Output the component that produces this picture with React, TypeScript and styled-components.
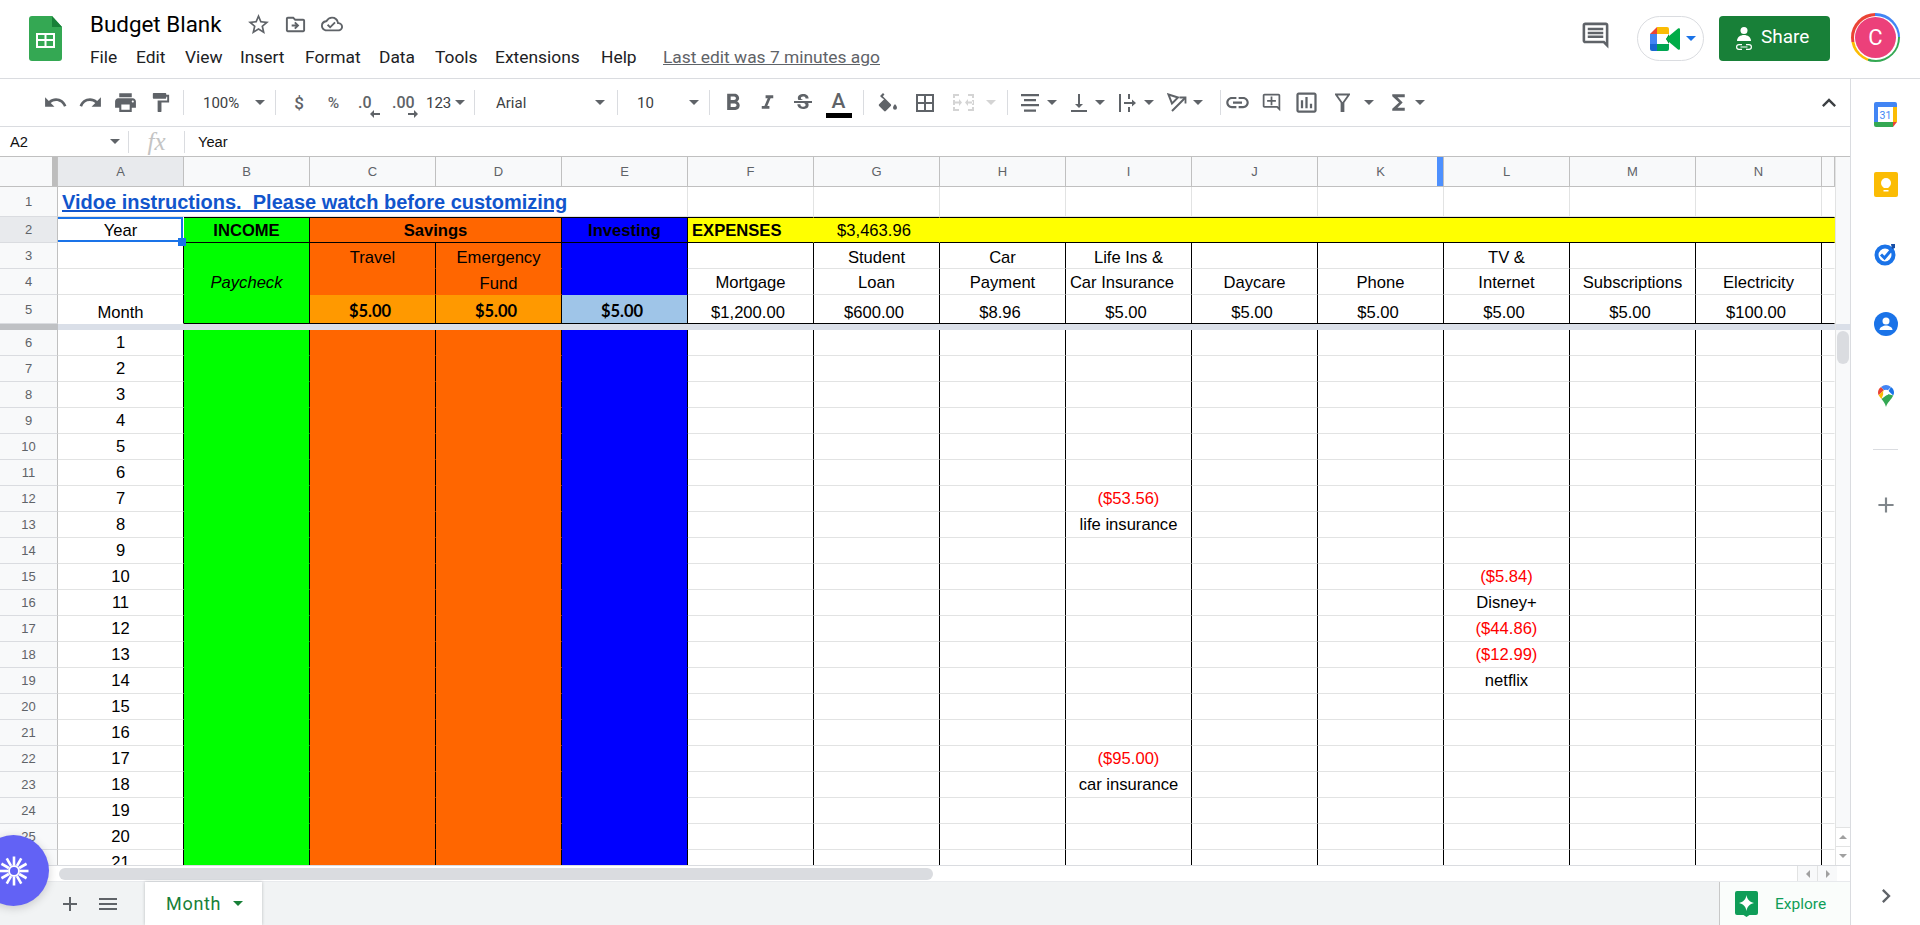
import React from 'react'
import styled, { createGlobalStyle } from 'styled-components'
import {
  MdUndo, MdRedo, MdPrint, MdFormatPaint, MdFormatBold, MdFormatItalic, MdStrikethroughS, MdBorderAll,
  MdVerticalAlignBottom, MdLink, MdOutlineAddComment, MdOutlineInsertChart, MdFunctions, MdExpandLess,
  MdChevronRight, MdAdd, MdMenu, MdStarBorder, MdOutlineDriveFileMove, MdOutlineCloudDone, MdOutlineComment,
} from 'react-icons/md'

const GRID = '#e2e3e3'
const HEAD = '#f8f9fa'
const GREY = '#5f6368'

const Global = createGlobalStyle`
  html, body { margin: 0; padding: 0; background: #fff; }
  * { box-sizing: border-box; }
`

const Page = styled.div`
  width: 1920px;
  height: 925px;
  position: relative;
  overflow: hidden;
  display: flex;
  flex-direction: column;
  font-family: Roboto, "Liberation Sans", sans-serif;
`

/* title bar */
const TitleBar = styled.header`
  height: 79px;
  flex: none;
  display: flex;
  border-bottom: 1px solid #dadce0;
  padding-left: 29px;
`
const Logo = styled.svg`
  margin-top: 16px;
  flex: none;
`
const TitleStack = styled.div`
  margin-left: 28px;
  display: flex;
  flex-direction: column;
`
const TitleRow = styled.div`
  height: 26px;
  margin-top: 11px;
  display: flex;
  align-items: center;
  color: ${GREY};
`
const DocName = styled.div`
  font-size: 22.4px;
  color: #000;
  width: 149.5px;
`
const TitleIcon = styled.span`
  width: 37px;
  flex: none;
  display: flex;
  justify-content: center;
`
const MenuRow = styled.nav`
  margin-top: 7px;
  height: 26px;
  display: flex;
  align-items: center;
  font-size: 17.4px;
  color: #202124;
`
const MenuItem = styled.span<{ $w: number }>`
  width: ${p => p.$w}px;
  flex: none;
`
const LastEdit = styled.span`
  color: #5f6368;
  text-decoration: underline;
  margin-left: 15px;
  font-size: 17.4px;
`
const TitleRight = styled.div`
  margin-left: auto;
  display: flex;
  align-items: flex-start;
  padding-top: 16px;
  padding-right: 20px;
  color: ${GREY};
`
const CommentBtn = styled.span`
  display: flex;
  margin-top: 4px;
  margin-right: 26px;
`
const MeetBtn = styled.div`
  width: 67px;
  height: 45px;
  border: 1px solid #dadce0;
  border-radius: 23px;
  display: flex;
  align-items: center;
  padding-left: 12px;
  gap: 6px;
`
const ShareBtn = styled.div`
  width: 111px;
  height: 45px;
  margin-left: 15px;
  border-radius: 4px;
  background: #188038;
  color: #fff;
  font-size: 19px;
  display: flex;
  align-items: center;
  padding-left: 16px;
  gap: 8px;
`
const ShareLabel = styled.span`
  padding-bottom: 5px;
`
const AvatarRing = styled.div`
  width: 49px;
  height: 49px;
  margin-left: 21px;
  margin-top: -3px;
  border-radius: 50%;
  background: conic-gradient(#4285f4 0 25%, #34a853 25% 55%, #fbbc04 55% 72%, #ea4335 72% 100%);
  display: flex;
  align-items: center;
  justify-content: center;
`
const AvatarInner = styled.div`
  width: 44px;
  height: 44px;
  border-radius: 50%;
  background: #fff;
  display: flex;
  align-items: center;
  justify-content: center;
`
const AvatarFace = styled.div`
  width: 41px;
  height: 41px;
  border-radius: 50%;
  background: #ec407a;
  color: #fff;
  font-size: 22px;
  display: flex;
  align-items: center;
  justify-content: center;
`

/* main area */
const Body = styled.div`
  flex: 1;
  min-height: 0;
  display: flex;
`
const Work = styled.main`
  width: 1851px;
  flex: none;
  display: flex;
  flex-direction: column;
  border-right: 1px solid #dadce0;
`

/* toolbar */
const Toolbar = styled.div`
  height: 48px;
  flex: none;
  display: flex;
  align-items: center;
  padding-left: 38px;
  border-bottom: 1px solid #dadce0;
  color: ${GREY};
  font-size: 15px;
`
const Sep = styled.span<{ $ml?: number }>`
  width: 1px;
  height: 25px;
  background: #dadce0;
  flex: none;
  margin-left: ${p => p.$ml || 0}px;
`
const Tool = styled.span<{ $w: number; $pl?: number; $pr?: number; $between?: boolean; $gap?: number }>`
  width: ${p => p.$w}px;
  flex: none;
  height: 30px;
  display: flex;
  align-items: center;
  justify-content: ${p => (p.$between ? 'space-between' : p.$pl !== undefined ? 'flex-start' : 'center')};
  padding-left: ${p => p.$pl || 0}px;
  padding-right: ${p => p.$pr || 0}px;
  gap: ${p => p.$gap || 0}px;
`
const ToolText = styled.span<{ $dark?: boolean; $bold?: boolean; $size?: number }>`
  position: relative;
  color: ${p => (p.$dark ? '#3c4043' : GREY)};
  font-weight: ${p => (p.$bold ? 500 : 400)};
  font-size: ${p => p.$size || 15}px;
  white-space: nowrap;
`
const Caret = styled.i<{ $c?: string; $s?: number }>`
  display: block;
  flex: none;
  width: 0;
  height: 0;
  border-left: ${p => p.$s || 5}px solid transparent;
  border-right: ${p => p.$s || 5}px solid transparent;
  border-top: ${p => p.$s || 5}px solid ${p => p.$c || GREY};
`
const SmallArrow = styled.svg<{ $r: number }>`
  position: absolute;
  right: ${p => p.$r}px;
  bottom: -6px;
`
const ColorA = styled.span`
  display: flex;
  flex-direction: column;
  align-items: center;
  width: 26px;
  margin-top: 2px;
  font-size: 21px;
  line-height: 22px;
  font-weight: 500;
  color: ${GREY};
`
const ColorBar = styled.span`
  display: block;
  width: 26px;
  height: 5px;
  background: #000;
  margin-top: 1px;
`
const Collapse = styled.span`
  margin-left: auto;
  margin-right: 7px;
  display: flex;
  color: #3c4043;
`

/* formula bar */
const FormulaBar = styled.div`
  height: 30px;
  flex: none;
  display: flex;
  align-items: center;
  font-family: "Liberation Sans", Arial, sans-serif;
  font-size: 14.7px;
  color: #111;
  border-bottom: 1px solid #c0c0c0;
`
const NameBox = styled.div`
  width: 129px;
  height: 22px;
  flex: none;
  display: flex;
  align-items: center;
  justify-content: space-between;
  padding: 0 8px 0 10px;
  border-right: 1px solid #dadce0;
`
const FxBox = styled.div`
  width: 56px;
  height: 22px;
  flex: none;
  display: flex;
  align-items: center;
  justify-content: center;
  border-right: 1px solid #dadce0;
  font-family: "Liberation Serif", serif;
  font-style: italic;
  font-size: 25px;
  color: #c4c4c4;
`
const FormulaText = styled.div`
  padding-left: 13px;
`

/* sheet */
const SheetRow = styled.div`
  flex: 1;
  min-height: 0;
  display: flex;
  position: relative;
`
const Grid = styled.div`
  width: 1835px;
  flex: none;
  height: 708px;
  overflow: hidden;
  display: grid;
  grid-template-columns: 58px repeat(14, 126px) 13px;
  grid-template-rows: 30px 30px 26px 26px 26px 29px 6px repeat(21, 26px);
  font-family: "Liberation Sans", Arial, sans-serif;
  font-size: 16.6px;
  color: #000;
  position: relative;
`
const ColHead = styled.div<{ $active?: boolean }>`
  position: relative;
  background: ${p => (p.$active ? '#e8eaed' : HEAD)};
  border-right: 1px solid #c0c0c0;
  border-bottom: 1px solid #c0c0c0;
  color: ${GREY};
  font-size: 13px;
  display: flex;
  align-items: center;
  justify-content: center;
`
const RowHead = styled.div<{ $active?: boolean }>`
  background: ${p => (p.$active ? '#e8eaed' : HEAD)};
  border-right: 1px solid #c0c0c0;
  border-bottom: 1px solid #dadce0;
  color: ${GREY};
  font-size: 13px;
  display: flex;
  align-items: center;
  justify-content: center;
`
const FreezeHandle = styled.span`
  position: absolute;
  right: 0;
  top: 0;
  bottom: 0;
  width: 5px;
  background: #bdbdbd;
`
const ResizeHandle = styled.span`
  position: absolute;
  right: 0;
  top: 0;
  bottom: 0;
  width: 6px;
  background: #4d90fe;
`
const Cell = styled.div<{
  $bg?: string; $rb?: string; $bb?: string; $bt?: string; $span?: number; $rows?: number
  $left?: boolean; $end?: boolean; $bold?: boolean; $italic?: boolean; $red?: boolean
  $pr?: number; $pl?: number; $pt?: number
}>`
  background: ${p => p.$bg || '#fff'};
  border-right: 1px solid ${p => p.$rb || GRID};
  border-bottom: 1px solid ${p => p.$bb || GRID};
  border-top: ${p => (p.$bt ? `1px solid ${p.$bt}` : 'none')};
  grid-column: span ${p => p.$span || 1};
  grid-row: span ${p => p.$rows || 1};
  display: flex;
  align-items: ${p => (p.$end ? 'flex-end' : 'center')};
  justify-content: ${p => (p.$left ? 'flex-start' : 'center')};
  font-weight: ${p => (p.$bold ? 700 : 400)};
  font-style: ${p => (p.$italic ? 'italic' : 'normal')};
  color: ${p => (p.$red ? '#ff0000' : '#000')};
  padding-right: ${p => p.$pr || 0}px;
  padding-left: ${p => p.$pl || 0}px;
  padding-top: ${p => p.$pt || 0}px;
  white-space: nowrap;
  overflow: visible;
  position: relative;
`
const Selected = styled(Cell)`
  box-shadow: inset 0 2px 0 #1a73e8, inset 0 -2px 0 #1a73e8, inset -2px 0 0 #1a73e8;
  border-color: transparent;
`
const FillHandle = styled.span`
  position: absolute;
  right: -3px;
  bottom: -4px;
  width: 8px;
  height: 8px;
  background: #1a73e8;
  z-index: 2;
`
const SheetLink = styled.a`
  color: #1155cc;
  font-size: 20px;
  font-weight: 700;
  text-decoration: underline;
  white-space: pre;
`
const Money = styled.span`
  font-family: Lato, sans-serif;
  font-weight: 700;
  font-size: 16.5px;
`
const FreezeBar = styled.div`
  grid-column: 2 / -1;
  background: #dadfe8;
`
const FreezeStub = styled.div`
  background: #bfc1c4;
`

const VScroll = styled.div`
  width: 15px;
  flex: none;
  display: flex;
  flex-direction: column;
  background: #f8f9fa;
  border-left: 1px solid ${GRID};
`
const VGap = styled.div`
  height: 173px;
  flex: none;
  border-bottom: 6px solid #dadfe8;
`
const VTrack = styled.div`
  flex: 1;
  padding: 1px 1px 0 1px;
`
const VThumb = styled.div`
  height: 33px;
  background: #dadce0;
  border-radius: 6px;
`
const ScrollArrow = styled.div`
  height: 19px;
  flex: none;
  display: flex;
  align-items: center;
  justify-content: center;
  background: #fff;
  border-top: 1px solid ${GRID};
`
const CaretUp = styled.i`
  display: block;
  width: 0;
  height: 0;
  border-left: 4px solid transparent;
  border-right: 4px solid transparent;
  border-bottom: 4px solid #a0a0a0;
`
const HScroll = styled.div`
  height: 16px;
  flex: none;
  display: flex;
  align-items: center;
  border-top: 1px solid #dadce0;
  padding-left: 59px;
  background: #fff;
`
const HThumb = styled.div`
  width: 874px;
  height: 12px;
  border-radius: 6px;
  background: #dadce0;
`
const HArrows = styled.div`
  margin-left: auto;
  display: flex;
  height: 15px;
  padding-right: 13px;
  background: #fff;
`
const HArrow = styled.div`
  width: 20px;
  display: flex;
  align-items: center;
  justify-content: center;
  border-left: 1px solid ${GRID};
  background: #f8f9fa;
`
const CaretSide = styled.i<{ $right?: boolean }>`
  display: block;
  width: 0;
  height: 0;
  border-top: 4px solid transparent;
  border-bottom: 4px solid transparent;
  ${p => (p.$right ? 'border-left' : 'border-right')}: 4px solid #a0a0a0;
`

/* tabs */
const TabBar = styled.footer`
  height: 44px;
  flex: none;
  background: #f1f3f4;
  display: flex;
  align-items: stretch;
  padding-left: 57px;
  border-top: 1px solid #e8eaed;
`
const TabIcon = styled.span<{ $w: number }>`
  width: ${p => p.$w}px;
  flex: none;
  display: flex;
  align-items: center;
  justify-content: center;
  color: ${GREY};
`
const SheetTab = styled.div`
  width: 117px;
  margin-left: 12px;
  background: #fff;
  color: #188038;
  font-size: 18px;
  letter-spacing: 0.7px;
  display: flex;
  align-items: center;
  padding-left: 21px;
  gap: 12px;
  box-shadow: 0 0 3px rgba(60, 64, 67, 0.3);
`
const Explore = styled.div`
  margin-left: auto;
  width: 131px;
  background: #fafdfb;
  border-left: 1px solid #c8c8c8;
  display: flex;
  align-items: center;
  padding-left: 15px;
  gap: 17px;
  color: #0f9d58;
  font-size: 15.5px;
`

/* side panel */
const SidePanel = styled.aside`
  flex: 1;
  display: flex;
  flex-direction: column;
  align-items: center;
  padding-top: 23px;
`
const SideIcon = styled.span<{ $h: number }>`
  height: ${p => p.$h}px;
  flex: none;
  display: flex;
  justify-content: center;
  align-items: flex-start;
`
const SideLine = styled.div`
  width: 25px;
  height: 1px;
  background: #dadce0;
  margin-bottom: 42px;
`
const SideExpand = styled.div`
  margin-top: auto;
  margin-bottom: 15px;
  display: flex;
  color: ${GREY};
`

const Launcher = styled.div`
  position: absolute;
  left: -22px;
  top: 835px;
  width: 71px;
  height: 71px;
  border-radius: 50%;
  background: #6262f5;
  box-shadow: 0 2px 10px rgba(0, 0, 0, 0.18);
  display: flex;
  align-items: center;
  justify-content: center;
  z-index: 5;
`

const SheetsLogo = () => (
  <Logo width="33" height="45" viewBox="0 0 33 45">
    <path d="M3 0h20l10 11v31a3 3 0 0 1-3 3H3a3 3 0 0 1-3-3V3a3 3 0 0 1 3-3z" fill="#34a853" />
    <path d="M23 0l10 11H23z" fill="#188038" />
    <path d="M7 17h19v15H7zM9 19v4h6.5v-4zm8.500 0v4H24v-4zM9 25v5h6.500v-5zm8.500 0v5H24v-5z" fill="#fff" fillRule="evenodd" />
  </Logo>
)

const MeetLogo = () => (
  <svg width="30" height="24" viewBox="0 0 30 24">
    <path d="M7 0L0 7h7z" fill="#ea4335" />
    <path d="M0 7h7v10H0z" fill="#4285f4" />
    <path d="M0 17h7v7H2a2 2 0 0 1-2-2z" fill="#1967d2" />
    <path d="M7 0h10a2 2 0 0 1 2 2v5H7z" fill="#fbbc04" />
    <path d="M7 17h12v5a2 2 0 0 1-2 2H7z" fill="#00a651" />
    <path d="M19 7v10l-3-5z" fill="#00832d" />
    <path d="M16 12l3-3 9-7.500c1-.7 2 0 2 1v19c0 1-1 1.700-2 1l-9-7.500z" fill="#00ac47" />
  </svg>
)

const ShareIcon = () => (
  <svg width="18" height="24" viewBox="0 0 18 24" fill="#fff">
    <circle cx="9" cy="3.500" r="3.500" />
    <path d="M2 14c0-4 3.500-6 7-6s7 2 7 6z" />
    <path d="M7 17H4a3 3 0 0 0 0 6h3v-1.200H4a1.800 1.800 0 0 1 0-3.600h3zM11 17h3a3 3 0 0 1 0 6h-3v-1.200h3a1.800 1.800 0 0 0 0-3.600h-3zM5.500 19.400h7v1.200h-7z" />
  </svg>
)

const DecimalArrow = ({ right, r }: { right?: boolean; r: number }) => (
  <SmallArrow $r={r} width="10" height="8" viewBox="0 0 10 8" fill={GREY}>
    {right ? <path d="M0 3h6V0l4 4-4 4V5H0z" /> : <path d="M10 3H4V0L0 4l4 4V5h6z" />}
  </SmallArrow>
)

const FillIcon = () => (
  <svg width="20" height="19" viewBox="0 0 20 19" fill={GREY}>
    <path d="M4 0l1.500 1.500L3.800 3.300l8 8c.5.5.5 1.200 0 1.700l-5 5c-.5.500-1.200.500-1.700 0l-5-5a1.200 1.200 0 0 1 0-1.700l5-5L3 5 1 3z" transform="translate(1 0)" />
    <path d="M17 11s2 2.300 2 3.700a2 2 0 0 1-4 0c0-1.400 2-3.700 2-3.700z" />
  </svg>
)

const MergeIcon = () => (
  <svg width="21" height="17" viewBox="0 0 21 17" fill="#d4d4d4">
    <path d="M0 0h6v2H2v2H0zM15 0h6v4h-2V2h-4zM0 13h2v2h4v2H0zM19 13h2v4h-6v-2h4zM0 6h2v5H0zM19 6h2v5h-2zM1 7.500h5V5l3 3.500L6 12V9.500H1zM20 7.500h-5V5l-3 3.500 3 3.500V9.500h5z" />
  </svg>
)

const AlignIcon = () => (
  <svg width="18" height="18" viewBox="0 0 18 18" fill={GREY}>
    <path d="M0 0h18v2.200H0zM3 5h12v2.200H3zM0 10h18v2.200H0zM3 15.500h12v2.200H3z" />
  </svg>
)

const WrapIcon = () => (
  <svg width="17" height="18" viewBox="0 0 17 18" fill={GREY}>
    <path d="M0 0h2v18H0zM9 0h2v5H9zM9 13h2v5H9zM5 8h8V5.500L17 9l-4 3.500V10H5z" />
  </svg>
)

const RotateIcon = () => (
  <svg width="20" height="19" viewBox="0 0 20 19" fill="none" stroke={GREY} strokeWidth="2">
    <path d="M1.500 1.500l9.500 3-6 6zM5 18L18 5" />
    <path d="M12.500 4.500H18.500V10.500" strokeWidth="1.800" />
  </svg>
)

const FunnelIcon = () => (
  <svg width="16" height="19" viewBox="0 0 16 19" fill="none" stroke={GREY} strokeWidth="2">
    <path d="M1 1h14L9 9.500V19H7V9.500z" />
  </svg>
)

const CalendarLogo = () => (
  <svg width="23" height="25" viewBox="0 0 23 25">
    <path d="M2 0h19a2 2 0 0 1 2 2v3H0V2a2 2 0 0 1 2-2z" fill="#4285f4" />
    <path d="M0 5h4v15H0z" fill="#4285f4" />
    <path d="M19 5h4v15h-4z" fill="#fbbc04" />
    <path d="M0 20h19v5H2a2 2 0 0 1-2-2z" fill="#34a853" />
    <path d="M19 20h4l-4 5z" fill="#ea4335" />
    <text x="11.500" y="16.500" textAnchor="middle" fontFamily="Roboto, sans-serif" fontSize="10.500" fill="#4285f4">31</text>
  </svg>
)

const KeepLogo = () => (
  <svg width="24" height="25" viewBox="0 0 24 25">
    <rect width="24" height="25" rx="2" fill="#fbbc04" />
    <circle cx="12" cy="11" r="5" fill="#fff" />
    <path d="M9.500 14h5v2h-5zM9.500 18h5v1.500h-5z" fill="#fff" />
  </svg>
)

const TasksLogo = () => (
  <svg width="24" height="24" viewBox="0 0 24 24">
    <circle cx="11" cy="13" r="8.500" fill="none" stroke="#1a73e8" strokeWidth="4" />
    <path d="M7 12.500l3.500 3.500L19 6" fill="none" stroke="#1a73e8" strokeWidth="3" />
    <path d="M17 2l4 0 0 4-3 1z" fill="#174ea6" />
  </svg>
)

const ContactsLogo = () => (
  <svg width="24" height="24" viewBox="0 0 24 24">
    <circle cx="12" cy="12" r="12" fill="#1a73e8" />
    <circle cx="12" cy="9" r="3.500" fill="#fff" />
    <path d="M5.500 18c0-3 4-4.500 6.500-4.500s6.500 1.500 6.500 4.500z" fill="#fff" />
  </svg>
)

const MapsLogo = () => (
  <svg width="16" height="22" viewBox="0 0 16 22">
    <path d="M3 2C1 3.500 0 5.500 0 7.500c0 1 .3 2 .7 2.800L6 5z" fill="#ea4335" />
    <path d="M3 2a8 8 0 0 1 10 0L9.500 5.500 6 5z" fill="#4285f4" />
    <path d="M13 2c2 1.600 3 3.500 3 5.500 0 1-.3 2-.8 3L10.500 6z" fill="#1a73e8" />
    <path d="M.7 10.300L6 5l-.8 4.500L3.500 14C2.300 12.700 1.300 11.500.7 10.300z" fill="#fbbc04" />
    <path d="M15.200 10.500L10 9 3.500 14c1.500 2 3.500 4 4.500 8 1-4.200 5.500-7.500 7.200-11.500z" fill="#34a853" />
    <circle cx="8" cy="7.500" r="2.800" fill="#fff" />
  </svg>
)

const ExploreLogo = () => (
  <svg width="23" height="26" viewBox="0 0 23 26">
    <path d="M2 0h19a2 2 0 0 1 2 2v20a2 2 0 0 1-2 2h-6.500l-3 2-3-2H2a2 2 0 0 1-2-2V2a2 2 0 0 1 2-2z" fill="#0f9d58" />
    <path d="M11.500 4c.6 4.200 3.300 7.200 7.500 8-4.200.8-6.900 3.800-7.500 8-.6-4.200-3.300-7.200-7.500-8 4.200-.8 6.900-3.800 7.500-8z" fill="#fff" />
  </svg>
)

const Burst = () => (
  <svg width="30" height="30" viewBox="-15 -15 30 30" stroke="#fff" strokeWidth="2.600">
    {Array.from({ length: 12 }).map((_, i) => (
      <line key={i} x1="0" y1="-6" x2="0" y2="-14.500" transform={`rotate(${i * 30})`} />
    ))}
    <circle r="5" fill="none" strokeWidth="2" />
  </svg>
)

const COLS = ['A', 'B', 'C', 'D', 'E', 'F', 'G', 'H', 'I', 'J', 'K', 'L', 'M', 'N']
const EXPENSE_COLS = ['F', 'G', 'H', 'I', 'J', 'K', 'L', 'M', 'N']

const HEADINGS: Record<string, [string, string, string]> = {
  F: ['', 'Mortgage', '$1,200.00'],
  G: ['Student', 'Loan', '$600.00'],
  H: ['Car', 'Payment', '$8.96'],
  I: ['Life Ins &', 'Car Insurance', '$5.00'],
  J: ['', 'Daycare', '$5.00'],
  K: ['', 'Phone', '$5.00'],
  L: ['TV &', 'Internet', '$5.00'],
  M: ['', 'Subscriptions', '$5.00'],
  N: ['', 'Electricity', '$100.00'],
}

const ENTRIES: Record<string, { text: string; red?: boolean }> = {
  I12: { text: '($53.56)', red: true },
  I13: { text: 'life insurance' },
  I22: { text: '($95.00)', red: true },
  I23: { text: 'car insurance' },
  L15: { text: '($5.84)', red: true },
  L16: { text: 'Disney+' },
  L17: { text: '($44.86)', red: true },
  L18: { text: '($12.99)', red: true },
  L19: { text: 'netflix' },
}

const GREEN = '#00ff00'
const ORANGE = '#ff6600'
const BLUE = '#0000ff'
const AMBER = '#ff9900'
const YELLOW = '#ffff00'
const BLACK = '#000'

const rows = Array.from({ length: 21 }, (_, i) => i + 6)

const App = () => (
  <Page>
    <Global />
    <TitleBar>
      <SheetsLogo />
      <TitleStack>
        <TitleRow>
          <DocName>Budget Blank</DocName>
          <TitleIcon><MdStarBorder size={25} /></TitleIcon>
          <TitleIcon><MdOutlineDriveFileMove size={23} /></TitleIcon>
          <TitleIcon><MdOutlineCloudDone size={22} /></TitleIcon>
        </TitleRow>
        <MenuRow>
          <MenuItem $w={46}>File</MenuItem>
          <MenuItem $w={49}>Edit</MenuItem>
          <MenuItem $w={55}>View</MenuItem>
          <MenuItem $w={65}>Insert</MenuItem>
          <MenuItem $w={74}>Format</MenuItem>
          <MenuItem $w={56}>Data</MenuItem>
          <MenuItem $w={60}>Tools</MenuItem>
          <MenuItem $w={106}>Extensions</MenuItem>
          <MenuItem $w={47}>Help</MenuItem>
          <LastEdit>Last edit was 7 minutes ago</LastEdit>
        </MenuRow>
      </TitleStack>
      <TitleRight>
        <CommentBtn><MdOutlineComment size={31} /></CommentBtn>
        <MeetBtn><MeetLogo /><Caret $c="#1a73e8" /></MeetBtn>
        <ShareBtn><ShareIcon /><ShareLabel>Share</ShareLabel></ShareBtn>
        <AvatarRing><AvatarInner><AvatarFace>C</AvatarFace></AvatarInner></AvatarRing>
      </TitleRight>
    </TitleBar>

    <Body>
      <Work>
        <Toolbar>
          <Tool $w={35}><MdUndo size={25} /></Tool>
          <Tool $w={35}><MdRedo size={25} /></Tool>
          <Tool $w={35}><MdPrint size={25} /></Tool>
          <Tool $w={35}><MdFormatPaint size={23} /></Tool>
          <Sep $ml={5} />
          <Tool $w={91} $between $pl={19} $pr={10}><ToolText $dark>100%</ToolText><Caret /></Tool>
          <Sep />
          <Tool $w={46}><ToolText $bold $size={17}>$</ToolText></Tool>
          <Tool $w={23}><ToolText $bold $size={15.5}>%</ToolText></Tool>
          <Tool $w={46} $pl={13}><ToolText $bold $size={16}>.0<DecimalArrow r={-8} /></ToolText></Tool>
          <Tool $w={25} $pl={1}><ToolText $bold $size={16}>.00<DecimalArrow right r={-3} /></ToolText></Tool>
          <Tool $w={58} $pl={10} $gap={4}><ToolText $dark>123</ToolText><Caret /></Tool>
          <Sep />
          <Tool $w={142} $between $pl={21} $pr={12}><ToolText $dark>Arial</ToolText><Caret /></Tool>
          <Sep />
          <Tool $w={91} $between $pl={19} $pr={10}><ToolText $dark>10</ToolText><Caret /></Tool>
          <Sep />
          <Tool $w={46}><MdFormatBold size={28} /></Tool>
          <Tool $w={23}><MdFormatItalic size={30} /></Tool>
          <Tool $w={48}><MdStrikethroughS size={24} /></Tool>
          <Tool $w={23}><ColorA>A<ColorBar /></ColorA></Tool>
          <Sep $ml={13} />
          <Tool $w={47}><FillIcon /></Tool>
          <Tool $w={27}><MdBorderAll size={24} /></Tool>
          <Tool $w={69} $pl={15} $gap={12}><MergeIcon /><Caret $c="#d4d4d4" /></Tool>
          <Sep />
          <Tool $w={57} $pl={13} $gap={8}><AlignIcon /><Caret /></Tool>
          <Tool $w={47} $pl={2} $gap={4}><MdVerticalAlignBottom size={24} /><Caret /></Tool>
          <Tool $w={48} $pl={7} $gap={8}><WrapIcon /><Caret /></Tool>
          <Tool $w={60} $pl={7} $gap={6}><RotateIcon /><Caret /></Tool>
          <Sep />
          <Tool $w={37} $pl={3}><MdLink size={27} /></Tool>
          <Tool $w={33} $pl={3}><MdOutlineAddComment size={21} /></Tool>
          <Tool $w={31} $pl={2}><MdOutlineInsertChart size={27} /></Tool>
          <Tool $w={52} $pl={13} $gap={14}><FunnelIcon /><Caret /></Tool>
          <Tool $w={52} $pl={12} $gap={4}><MdFunctions size={25} /><Caret /></Tool>
          <Collapse><MdExpandLess size={28} /></Collapse>
        </Toolbar>

        <FormulaBar>
          <NameBox>A2<Caret $s={5} /></NameBox>
          <FxBox>fx</FxBox>
          <FormulaText>Year</FormulaText>
        </FormulaBar>

        <SheetRow>
          <Grid>
            <ColHead><FreezeHandle /></ColHead>
            {COLS.map(c => (
              <ColHead key={c} $active={c === 'A'}>
                {c}
                {c === 'K' && <ResizeHandle />}
              </ColHead>
            ))}
            <ColHead />

            <RowHead>1</RowHead>
            <Cell $span={5} $left $pl={4} $pt={2}>
              <SheetLink>Vidoe instructions.  Please watch before customizing</SheetLink>
            </Cell>
            {[...EXPENSE_COLS, 'O'].map(c => <Cell key={c} $rb={c === 'O' ? 'transparent' : undefined} />)}

            <RowHead $active>2</RowHead>
            <Selected $pt={2}>Year<FillHandle /></Selected>
            <Cell $bg={GREEN} $bold $pt={2} $rb={BLACK} $bb={BLACK} $bt={BLACK}>INCOME</Cell>
            <Cell $bg={ORANGE} $bold $pt={2} $span={2} $rb={BLACK} $bb={BLACK} $bt={BLACK}>Savings</Cell>
            <Cell $bg={BLUE} $bold $pt={2} $rb={BLACK} $bb={BLACK} $bt={BLACK}>Investing</Cell>
            <Cell $bg={YELLOW} $bold $pt={2} $left $pl={4} $rb="transparent" $bb={BLACK} $bt={BLACK}>EXPENSES</Cell>
            <Cell $bg={YELLOW} $pt={2} $rb="transparent" $bb={BLACK} $bt={BLACK} $pr={5}>$3,463.96</Cell>
            <Cell $bg={YELLOW} $span={8} $rb="transparent" $bb={BLACK} $bt={BLACK} />

            <RowHead>3</RowHead>
            <Cell $rb={BLACK} />
            <Cell $bg={GREEN} $rows={3} $italic $rb={BLACK} $bb={BLACK}>Paycheck</Cell>
            <Cell $bg={ORANGE} $pt={5} $rb={BLACK} $bb="transparent">Travel</Cell>
            <Cell $bg={ORANGE} $pt={5} $rb={BLACK} $bb="transparent">Emergency</Cell>
            <Cell $bg={BLUE} $rb={BLACK} $bb="transparent" />
            {EXPENSE_COLS.map(c => <Cell key={c} $pt={5} $rb={BLACK}>{HEADINGS[c][0]}</Cell>)}
            <Cell $rb="transparent" />

            <RowHead>4</RowHead>
            <Cell $rb={BLACK} />
            <Cell $bg={ORANGE} $rb={BLACK} $bb="transparent" />
            <Cell $bg={ORANGE} $pt={4} $rb={BLACK} $bb="transparent">Fund</Cell>
            <Cell $bg={BLUE} $rb={BLACK} $bb="transparent" />
            {EXPENSE_COLS.map(c => (
              <Cell key={c} $pt={3} $rb={BLACK} $pr={c === 'I' ? 13 : 0}>{HEADINGS[c][1]}</Cell>
            ))}
            <Cell $rb="transparent" />

            <RowHead>5</RowHead>
            <Cell $end $rb={BLACK} $bb="transparent">Month</Cell>
            <Cell $bg={AMBER} $pt={4} $rb={BLACK} $bb={BLACK} $pr={5}><Money>$5.00</Money></Cell>
            <Cell $bg={AMBER} $pt={4} $rb={BLACK} $bb={BLACK} $pr={5}><Money>$5.00</Money></Cell>
            <Cell $bg="#9fc5e8" $pt={4} $rb={BLACK} $bb={BLACK} $pr={5}><Money>$5.00</Money></Cell>
            {EXPENSE_COLS.map(c => <Cell key={c} $end $rb={BLACK} $bb={BLACK} $pr={5}>{HEADINGS[c][2]}</Cell>)}
            <Cell $rb="transparent" $bb={BLACK} />

            <FreezeStub />
            <FreezeBar />

            {rows.map(r => (
              <React.Fragment key={r}>
                <RowHead>{r}</RowHead>
                <Cell $rb={BLACK}>{r - 5}</Cell>
                <Cell $bg={GREEN} $rb={BLACK} $bb="transparent" />
                <Cell $bg={ORANGE} $rb={BLACK} $bb="transparent" />
                <Cell $bg={ORANGE} $rb={BLACK} $bb="transparent" />
                <Cell $bg={BLUE} $rb={BLACK} $bb="transparent" />
                {EXPENSE_COLS.map(c => {
                  const entry = ENTRIES[`${c}${r}`]
                  return <Cell key={c} $rb={BLACK} $red={entry?.red}>{entry?.text}</Cell>
                })}
                <Cell $rb="transparent" />
              </React.Fragment>
            ))}
          </Grid>
          <VScroll>
            <VGap />
            <VTrack><VThumb /></VTrack>
            <ScrollArrow><CaretUp /></ScrollArrow>
            <ScrollArrow><Caret $c="#a0a0a0" $s={4} /></ScrollArrow>
          </VScroll>
        </SheetRow>

        <HScroll>
          <HThumb />
          <HArrows>
            <HArrow><CaretSide /></HArrow>
            <HArrow><CaretSide $right /></HArrow>
          </HArrows>
        </HScroll>

        <TabBar>
          <TabIcon $w={26}><MdAdd size={24} /></TabIcon>
          <TabIcon $w={50}><MdMenu size={24} /></TabIcon>
          <SheetTab>Month<Caret $c="#188038" /></SheetTab>
          <Explore><ExploreLogo />Explore</Explore>
        </TabBar>
      </Work>

      <SidePanel>
        <SideIcon $h={70}><CalendarLogo /></SideIcon>
        <SideIcon $h={70}><KeepLogo /></SideIcon>
        <SideIcon $h={70}><TasksLogo /></SideIcon>
        <SideIcon $h={73}><ContactsLogo /></SideIcon>
        <SideIcon $h={64}><MapsLogo /></SideIcon>
        <SideLine />
        <SideIcon $h={30}><MdAdd size={26} color="#80868b" /></SideIcon>
        <SideExpand><MdChevronRight size={28} /></SideExpand>
      </SidePanel>
    </Body>

    <Launcher><Burst /></Launcher>
  </Page>
)

export default App
